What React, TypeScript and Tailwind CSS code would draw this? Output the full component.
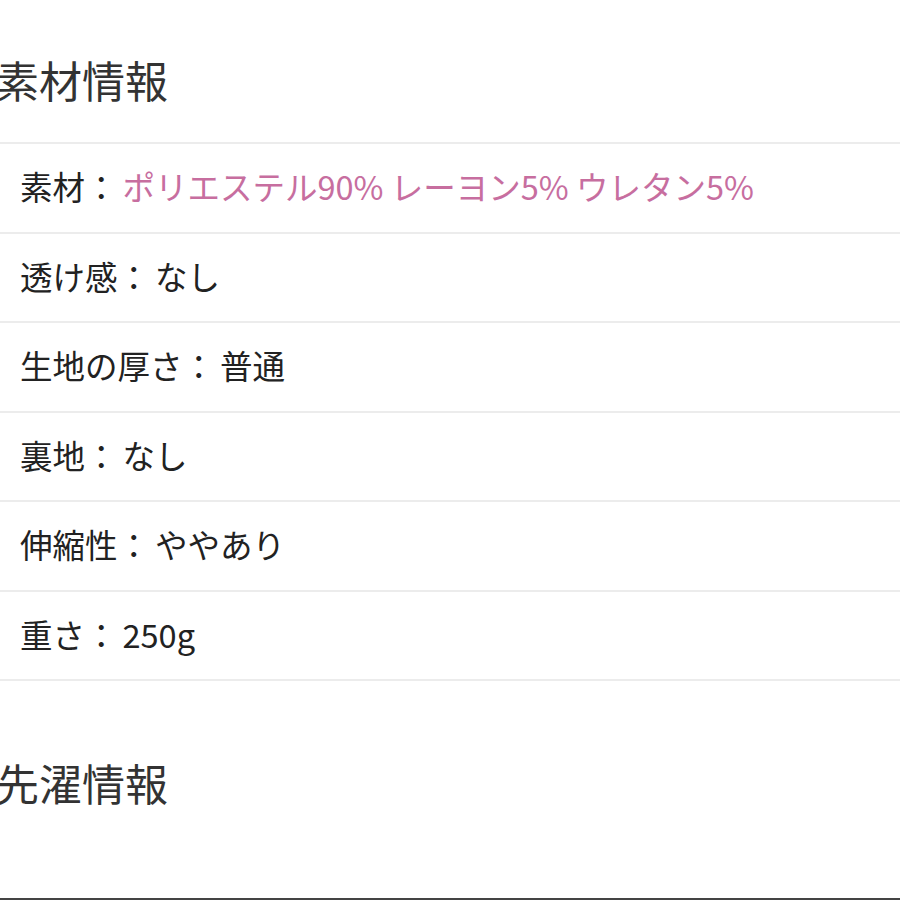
const font = { fontFamily: '"Noto Sans CJK JP", "Noto Sans", sans-serif' };

const rows: { label: string; value: string; pink?: boolean }[] = [
  { label: "素材：", value: "ポリエステル90% レーヨン5% ウレタン5%", pink: true },
  { label: "透け感：", value: "なし" },
  { label: "生地の厚さ：", value: "普通" },
  { label: "裏地：", value: "なし" },
  { label: "伸縮性：", value: "ややあり" },
  { label: "重さ：", value: "250g" },
];

export default function App() {
  return (
    <div className="w-[900px] h-[900px] bg-white overflow-hidden flex flex-col" style={font}>
      {/* 素材情報 */}
      <div className="h-[142px] pt-[16px] flex items-center">
        <h2 className="-ml-[4px] text-[43px] leading-none text-[#333] font-normal">素材情報</h2>
      </div>

      <div className="border-b-2 border-[#ececec]">
        {rows.map((row) => (
          <div
            key={row.label}
            className="h-[89.5px] pb-[3px] border-t-2 border-[#ececec] flex items-center pl-[20px] text-[32.5px] leading-none text-[#222]"
          >
            <span>{row.label}</span>
            <span className={row.pink ? "ml-[5px] text-[#c76e9f]" : "ml-[5px]"}>{row.value}</span>
          </div>
        ))}
      </div>

      {/* 洗濯情報 */}
      <div className="flex-1 flex items-center pb-[14px]">
        <h2 className="-ml-[4px] text-[43px] leading-none text-[#333] font-normal">先濯情報</h2>
      </div>
      <div className="h-[2px] bg-[#444]" />
    </div>
  );
}
